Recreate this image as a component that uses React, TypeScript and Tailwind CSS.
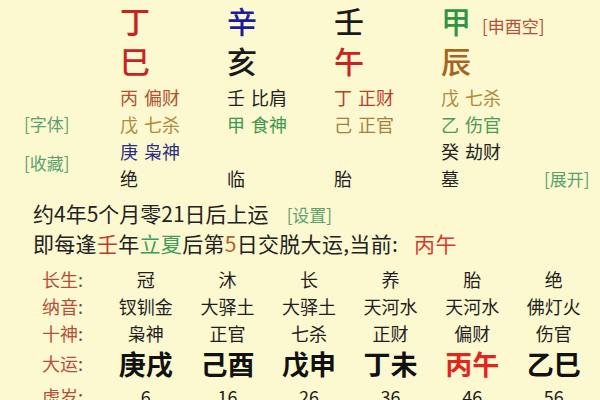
import React from 'react'

type Hidden = { stem: string; god: string; color: string } | null

interface Pillar {
  stem: string
  stemColor: string
  branch: string
  branchColor: string
  hidden: Hidden[]
  life: string
}

const pillars: Pillar[] = [
  {
    stem: '丁',
    stemColor: 'text-[#c8231f]',
    branch: '巳',
    branchColor: 'text-[#c8231f]',
    hidden: [
      { stem: '丙', god: '偏财', color: 'text-[#b4502f]' },
      { stem: '戊', god: '七杀', color: 'text-[#b08a3e]' },
      { stem: '庚', god: '枭神', color: 'text-[#2b2d86]' },
    ],
    life: '绝',
  },
  {
    stem: '辛',
    stemColor: 'text-[#1c1c9c]',
    branch: '亥',
    branchColor: 'text-[#1a1a1a]',
    hidden: [
      { stem: '壬', god: '比肩', color: 'text-[#222222]' },
      { stem: '甲', god: '食神', color: 'text-[#3f9650]' },
      null,
    ],
    life: '临',
  },
  {
    stem: '壬',
    stemColor: 'text-[#1a1a1a]',
    branch: '午',
    branchColor: 'text-[#c8231f]',
    hidden: [
      { stem: '丁', god: '正财', color: 'text-[#bc3d2c]' },
      { stem: '己', god: '正官', color: 'text-[#a7803e]' },
      null,
    ],
    life: '胎',
  },
  {
    stem: '甲',
    stemColor: 'text-[#2f9545]',
    branch: '辰',
    branchColor: 'text-[#a5651f]',
    hidden: [
      { stem: '戊', god: '七杀', color: 'text-[#b08a3e]' },
      { stem: '乙', god: '伤官', color: 'text-[#4a9a58]' },
      { stem: '癸', god: '劫财', color: 'text-[#222222]' },
    ],
    life: '墓',
  },
]

const luck = [
  { life: '冠', nayin: '钗钏金', god: '枭神', gz: '庚戌', age: '6' },
  { life: '沐', nayin: '大驿土', god: '正官', gz: '己酉', age: '16' },
  { life: '长', nayin: '大驿土', god: '七杀', gz: '戊申', age: '26' },
  { life: '养', nayin: '天河水', god: '正财', gz: '丁未', age: '36' },
  { life: '胎', nayin: '天河水', god: '偏财', gz: '丙午', age: '46', current: true },
  { life: '绝', nayin: '佛灯火', god: '伤官', gz: '乙巳', age: '56' },
]

function RowLabel({ text }: { text: string }) {
  return (
    <div className="w-[105px] shrink-0 pl-[42px] whitespace-nowrap">
      <span className="text-[#b4503a]">{text}</span>
      <span className="text-[#555]">:</span>
    </div>
  )
}

export default function App() {
  return (
    <div
      className="w-[600px] h-[400px] overflow-hidden bg-[#fcf8cf] text-[#1f1f1f]"
      style={{ fontFamily: '"Noto Sans CJK SC", "Noto Sans", sans-serif' }}
    >
      {/* pillars */}
      <div className="flex">
        <div className="w-[120px] shrink-0 pl-[24px] pt-[111px] text-[17px] text-[#5aa272]">
          <div className="h-[26px] leading-[26px]">[字体]</div>
          <div className="h-[13px]" />
          <div className="h-[26px] leading-[26px]">[收藏]</div>
        </div>
        {pillars.map((p, i) => (
          <div key={i} className="w-[107px] shrink-0">
            <div className="h-[40px] flex items-center">
              <span className={`text-[30px] leading-[40px] font-medium ${p.stemColor}`}>{p.stem}</span>
              {i === 3 && (
                <span className="ml-[11px] mt-[12px] text-[17px] leading-[24px] text-[#b4503a] whitespace-nowrap">[申酉空]</span>
              )}
            </div>
            <div className="h-[40px] flex items-center">
              <span className={`text-[30px] leading-[40px] font-medium ${p.branchColor}`}>{p.branch}</span>
            </div>
            <div className="mt-[4px] text-[18px]">
              {p.hidden.map((h, j) => (
                <div key={j} className={`h-[27px] leading-[27px] whitespace-nowrap ${h ? h.color : ''}`}>
                  {h && (
                    <>
                      {h.stem}
                      <span className="ml-[6px]">{h.god}</span>
                    </>
                  )}
                </div>
              ))}
              <div className="h-[27px] leading-[27px] flex whitespace-nowrap">
                <span>{p.life}</span>
                {i === 3 && (
                  <span className="ml-[85px] text-[17px] text-[#5aa272]">[展开]</span>
                )}
              </div>
            </div>
          </div>
        ))}
      </div>

      {/* start of luck */}
      <div className="mt-[6px] pl-[33px] text-[21px] text-[#222]">
        <div className="h-[30px] leading-[30px] whitespace-nowrap">
          约4年5个月零21日后上运
          <span className="ml-[18px] text-[17px] text-[#5aa272]">[设置]</span>
        </div>
        <div className="h-[30px] leading-[30px] whitespace-nowrap tracking-[0.3px]">
          即每逢<span className="text-[#c23a2a]">壬</span>年
          <span className="text-[#3d9c5c]">立夏</span>后第
          <span className="text-[#b5602a]">5</span>日交脱大运,当前:
          <span className="ml-[16px] text-[#d33a2b]">丙午</span>
        </div>
      </div>

      {/* luck table */}
      <div className="mt-[7px] text-[18px]">
        <div className="flex h-[28px] items-center">
          <RowLabel text="长生" />
          {luck.map((l, i) => (
            <div key={i} className="w-[81.6px] text-center">{l.life}</div>
          ))}
        </div>
        <div className="flex h-[27px] items-center">
          <RowLabel text="纳音" />
          {luck.map((l, i) => (
            <div key={i} className="w-[81.6px] text-center">{l.nayin}</div>
          ))}
        </div>
        <div className="flex h-[27px] items-center">
          <RowLabel text="十神" />
          {luck.map((l, i) => (
            <div key={i} className="w-[81.6px] text-center">{l.god}</div>
          ))}
        </div>
        <div className="flex h-[33px] items-center">
          <RowLabel text="大运" />
          {luck.map((l, i) => (
            <div
              key={i}
              className={`w-[81.6px] text-center text-[27px] font-bold leading-[33px] ${l.current ? 'text-[#e0261f]' : 'text-[#111]'}`}
            >
              {l.gz}
            </div>
          ))}
        </div>
        <div className="flex h-[33px] items-center">
          <RowLabel text="虚岁" />
          {luck.map((l, i) => (
            <div key={i} className="w-[81.6px] text-center">{l.age}</div>
          ))}
        </div>
      </div>
    </div>
  )
}
